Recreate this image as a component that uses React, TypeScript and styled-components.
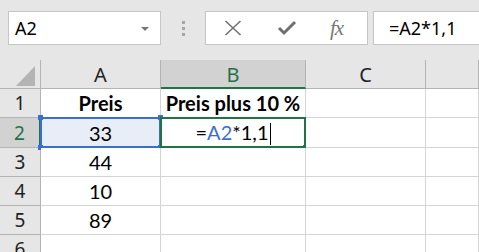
import { Fragment } from "react";
import styled, { createGlobalStyle, css } from "styled-components";

const GlobalStyle = createGlobalStyle`
  html, body {
    margin: 0;
    padding: 0;
    background: #e6e6e6;
    overflow: hidden;
  }
`;

const uiFont = `"Noto Sans", "Open Sans", sans-serif`;
const cellFont = `Lato, "Liberation Sans", sans-serif`;
const green = "#217346";
const blue = "#3a6fd0";

const Screen = styled.div`
  width: 479px;
  height: 252px;
  background: #e6e6e6;
  overflow: hidden;
`;

const Toolbar = styled.div`
  display: flex;
  align-items: flex-start;
  height: 60px;
  padding: 11px 0 0 8px;
  box-sizing: border-box;
  font-family: ${uiFont};
`;

const NameBox = styled.div`
  width: 153px;
  height: 34px;
  box-sizing: border-box;
  background: #fff;
  border: 1px solid #c6c6c6;
  display: flex;
  align-items: center;
  justify-content: space-between;
  padding: 0 11px 0 6px;
  font-size: 18px;
  color: #000;
`;

const DropArrow = styled.span`
  width: 0;
  height: 0;
  border-left: 4px solid transparent;
  border-right: 4px solid transparent;
  border-top: 4px solid #777;
  margin-top: 2px;
`;

const Grip = styled.div`
  width: 44px;
  height: 34px;
  display: flex;
  flex-direction: column;
  align-items: center;
  justify-content: center;
  gap: 3px;
  span {
    width: 3px;
    height: 3px;
    background: #a6a6a6;
  }
`;

const FxButtons = styled.div`
  width: 163px;
  height: 34px;
  box-sizing: border-box;
  background: #fff;
  border: 1px solid #c6c6c6;
  display: flex;
  align-items: center;
  padding: 0 0 0 18px;
  gap: 35px;
`;

const FxLabel = styled.span`
  font-family: "Liberation Serif", serif;
  font-style: italic;
  font-size: 21px;
  color: #777;
  letter-spacing: -1px;
  margin-left: -2px;
`;

const FormulaInput = styled.div`
  flex: 1;
  margin-left: 5px;
  height: 34px;
  box-sizing: border-box;
  background: #fff;
  border: 1px solid #c6c6c6;
  border-right: none;
  display: flex;
  align-items: center;
  padding-left: 15px;
  font-size: 18px;
  color: #000;
`;

const Grid = styled.div`
  display: grid;
  grid-template-columns: 41px 120px 145px 120px 1fr;
  grid-template-rows: 29px 29px 30px 29px 29px 29px 29px;
  background: #fff;
`;

const Corner = styled.div`
  background: #e6e6e6;
  border-right: 1px solid #b4b4b4;
  border-bottom: 1px solid #b4b4b4;
  position: relative;
  svg {
    position: absolute;
    left: 15px;
    top: 4px;
  }
`;

const ColHead = styled.div<{ $selected?: boolean }>`
  background: ${(p) => (p.$selected ? "#d2d2d2" : "#e6e6e6")};
  border-right: 1px solid #b4b4b4;
  border-bottom: ${(p) => (p.$selected ? `2px solid ${green}` : "1px solid #b4b4b4")};
  display: flex;
  align-items: center;
  justify-content: center;
  font-family: ${uiFont};
  font-size: 20px;
  color: ${(p) => (p.$selected ? green : "#222")};
  box-sizing: border-box;
  padding-top: ${(p) => (p.$selected ? "1px" : "0")};
`;

const RowHead = styled.div<{ $selected?: boolean }>`
  background: ${(p) => (p.$selected ? "#d2d2d2" : "#e6e6e6")};
  border-right: ${(p) => (p.$selected ? `2px solid ${green}` : "1px solid #b4b4b4")};
  border-bottom: 1px solid #b4b4b4;
  display: flex;
  align-items: center;
  justify-content: center;
  font-family: ${uiFont};
  font-size: 19px;
  color: ${(p) => (p.$selected ? green : "#222")};
  box-sizing: border-box;
`;

const Cell = styled.div<{ $bold?: boolean; $ref?: boolean }>`
  position: relative;
  border-right: 1px solid #d4d4d4;
  border-bottom: 1px solid #d4d4d4;
  display: flex;
  align-items: center;
  justify-content: center;
  font-family: ${cellFont};
  font-size: 20px;
  font-weight: ${(p) => (p.$bold ? 700 : 400)};
  color: #000;
  background: ${(p) => (p.$ref ? "#e8eef8" : "#fff")};
  box-sizing: border-box;
`;

const Frame = styled.div<{ $color: string }>`
  position: absolute;
  left: -1px;
  top: -1px;
  right: -1px;
  bottom: -1px;
  border: 2px solid ${(p) => p.$color};
  pointer-events: none;
`;

const Handle = styled.span<{ $color: string; $x: "left" | "right"; $y: "top" | "bottom" }>`
  position: absolute;
  width: 5px;
  height: 5px;
  background: ${(p) => p.$color};
  ${(p) => (p.$x === "left" ? css`left: -4px;` : css`right: -4px;`)}
  ${(p) => (p.$y === "top" ? css`top: -4px;` : css`bottom: -4px;`)}
`;

const RefText = styled.span`
  color: ${blue};
`;

const Caret = styled.span`
  display: inline-block;
  width: 1px;
  height: 22px;
  background: #000;
  margin-left: 1px;
  vertical-align: middle;
`;

const rows = [
  { n: 1, a: "Preis", b: "Preis plus 10 %" },
  { n: 2, a: "33", b: "" },
  { n: 3, a: "44", b: "" },
  { n: 4, a: "10", b: "" },
  { n: 5, a: "89", b: "" },
  { n: 6, a: "", b: "" },
];

const App = () => {
  return (
    <Screen>
      <GlobalStyle />
      <Toolbar>
        <NameBox>
          A2
          <DropArrow />
        </NameBox>
        <Grip>
          <span />
          <span />
          <span />
        </Grip>
        <FxButtons>
          <svg width="18" height="16" viewBox="0 0 18 16">
            <path d="M1.5 1 L16.5 15 M16.5 1 L1.5 15" stroke="#6f6f6f" strokeWidth="1.5" fill="none" />
          </svg>
          <svg width="20" height="16" viewBox="0 0 20 16">
            <path d="M2 8 L7 13 L18 2" stroke="#6f6f6f" strokeWidth="3" fill="none" />
          </svg>
          <FxLabel>fx</FxLabel>
        </FxButtons>
        <FormulaInput>=A2*1,1</FormulaInput>
      </Toolbar>
      <Grid>
        <Corner>
          <svg width="22" height="24" viewBox="0 0 22 24">
            <polygon points="1,22 20,22 20,2" fill="#b4b4b4" />
          </svg>
        </Corner>
        <ColHead>A</ColHead>
        <ColHead $selected>B</ColHead>
        <ColHead>C</ColHead>
        <ColHead />
        {rows.map((r) => (
          <Fragment key={r.n}>
            <RowHead $selected={r.n === 2}>{r.n}</RowHead>
            <Cell $bold={r.n === 1} $ref={r.n === 2}>
              {r.a}
              {r.n === 2 && (
                <Frame $color={blue}>
                  <Handle $color={blue} $x="left" $y="top" />
                  <Handle $color={blue} $x="right" $y="top" />
                  <Handle $color={blue} $x="left" $y="bottom" />
                  <Handle $color={blue} $x="right" $y="bottom" />
                </Frame>
              )}
            </Cell>
            <Cell $bold={r.n === 1}>
              {r.n === 2 ? (
                <span>
                  =<RefText>A2</RefText>*1,1
                  <Caret />
                </span>
              ) : (
                r.b
              )}
              {r.n === 2 && (
                <Frame $color={green}>
                  <Handle $color={green} $x="right" $y="bottom" />
                </Frame>
              )}
            </Cell>
            <Cell />
            <Cell />
          </Fragment>
        ))}
      </Grid>
    </Screen>
  );
};

export default App;
